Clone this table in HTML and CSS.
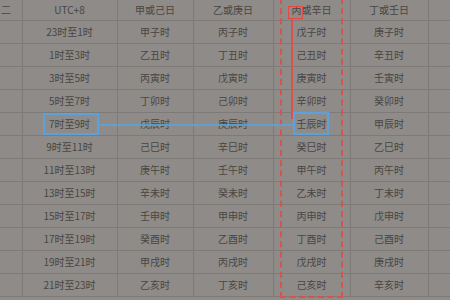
FILE: index.html
```html
<!DOCTYPE html>
<html lang="zh">
<head>
<meta charset="utf-8">
<link rel="stylesheet" href="styles.css">
</head>
<body>
<div class="sheet">
  <table class="grid">
    <colgroup>
      <col class="c0"><col class="c1"><col class="c2"><col class="c3"><col class="c4"><col class="c5"><col class="c6">
    </colgroup>
    <thead>
      <tr><th class="edge">二</th><th>UTC+8</th><th>甲或己日</th><th>乙或庚日</th><th>丙或辛日</th><th>丁或壬日</th><th></th></tr>
    </thead>
    <tbody>
      <tr><td></td><td>23时至1时</td><td>甲子时</td><td>丙子时</td><td>戊子时</td><td>庚子时</td><td></td></tr>
      <tr><td></td><td>1时至3时</td><td>乙丑时</td><td>丁丑时</td><td>己丑时</td><td>辛丑时</td><td></td></tr>
      <tr><td></td><td>3时至5时</td><td>丙寅时</td><td>戊寅时</td><td>庚寅时</td><td>壬寅时</td><td></td></tr>
      <tr><td></td><td>5时至7时</td><td>丁卯时</td><td>己卯时</td><td>辛卯时</td><td>癸卯时</td><td></td></tr>
      <tr><td></td><td>7时至9时</td><td>戊辰时</td><td>庚辰时</td><td>壬辰时</td><td>甲辰时</td><td></td></tr>
      <tr><td></td><td>9时至11时</td><td>己巳时</td><td>辛巳时</td><td>癸巳时</td><td>乙巳时</td><td></td></tr>
      <tr><td></td><td>11时至13时</td><td>庚午时</td><td>壬午时</td><td>甲午时</td><td>丙午时</td><td></td></tr>
      <tr><td></td><td>13时至15时</td><td>辛未时</td><td>癸未时</td><td>乙未时</td><td>丁未时</td><td></td></tr>
      <tr><td></td><td>15时至17时</td><td>壬申时</td><td>甲申时</td><td>丙申时</td><td>戊申时</td><td></td></tr>
      <tr><td></td><td>17时至19时</td><td>癸酉时</td><td>乙酉时</td><td>丁酉时</td><td>己酉时</td><td></td></tr>
      <tr><td></td><td>19时至21时</td><td>甲戌时</td><td>丙戌时</td><td>戊戌时</td><td>庚戌时</td><td></td></tr>
      <tr><td></td><td>21时至23时</td><td>乙亥时</td><td>丁亥时</td><td>己亥时</td><td>辛亥时</td><td></td></tr>
    </tbody>
  </table>
  <div class="mark red-dash"></div>
  <div class="mark red-box"></div>
  <div class="mark red-line"></div>
  <div class="mark blue-box blue-a"></div>
  <div class="mark blue-box blue-b"></div>
  <div class="mark blue-line"></div>
</div>
</body>
</html>
```

FILE: styles.css
```css
html, body {
  margin: 0;
  padding: 0;
  background: #8e8b88;
}
.sheet {
  position: relative;
  width: 450px;
  height: 300px;
  overflow: hidden;
  background: #8e8b88;
}
.grid {
  table-layout: fixed;
  border-collapse: collapse;
  width: 450px;
  font-family: "Noto Sans CJK SC", "Noto Sans", sans-serif;
  font-size: 10px;
  color: #494643;
}
.c0 { width: 22px; }
.c1 { width: 95px; }
.c2 { width: 76px; }
.c3 { width: 80px; }
.c4 { width: 77px; }
.c5 { width: 78px; }
.c6 { width: 22px; }
.grid th, .grid td {
  border: 1px solid #7d7a77;
  padding: 0;
  text-align: center;
  font-weight: normal;
  white-space: nowrap;
  overflow: hidden;
  line-height: 12px;
}
.grid thead th {
  border-top: none;
  height: 20px;
}
.grid tbody td {
  height: 22px;
}
.grid tr > :first-child { border-left: none; }
.grid tr > :last-child { border-right: none; }
.grid .edge {
  text-align: left;
  padding-left: 1px;
}
.mark {
  position: absolute;
  box-sizing: border-box;
}
.red-dash {
  left: 280px;
  top: -2px;
  width: 63px;
  height: 300px;
  border: 2px dashed #d9534c;
}
.red-box {
  left: 288px;
  top: 6px;
  width: 15px;
  height: 13px;
  border: 1.5px solid #e04a44;
}
.red-line {
  left: 291px;
  top: 19px;
  width: 2px;
  height: 100px;
  background: #d9534c;
}
.blue-box {
  border: 2px solid #5ba1dc;
}
.blue-a {
  left: 43px;
  top: 113px;
  width: 56px;
  height: 22px;
}
.blue-b {
  left: 293px;
  top: 112px;
  width: 36px;
  height: 23px;
}
.blue-line {
  left: 99px;
  top: 124px;
  width: 194px;
  height: 2px;
  background: #5ba1dc;
  opacity: 0.85;
}
```
